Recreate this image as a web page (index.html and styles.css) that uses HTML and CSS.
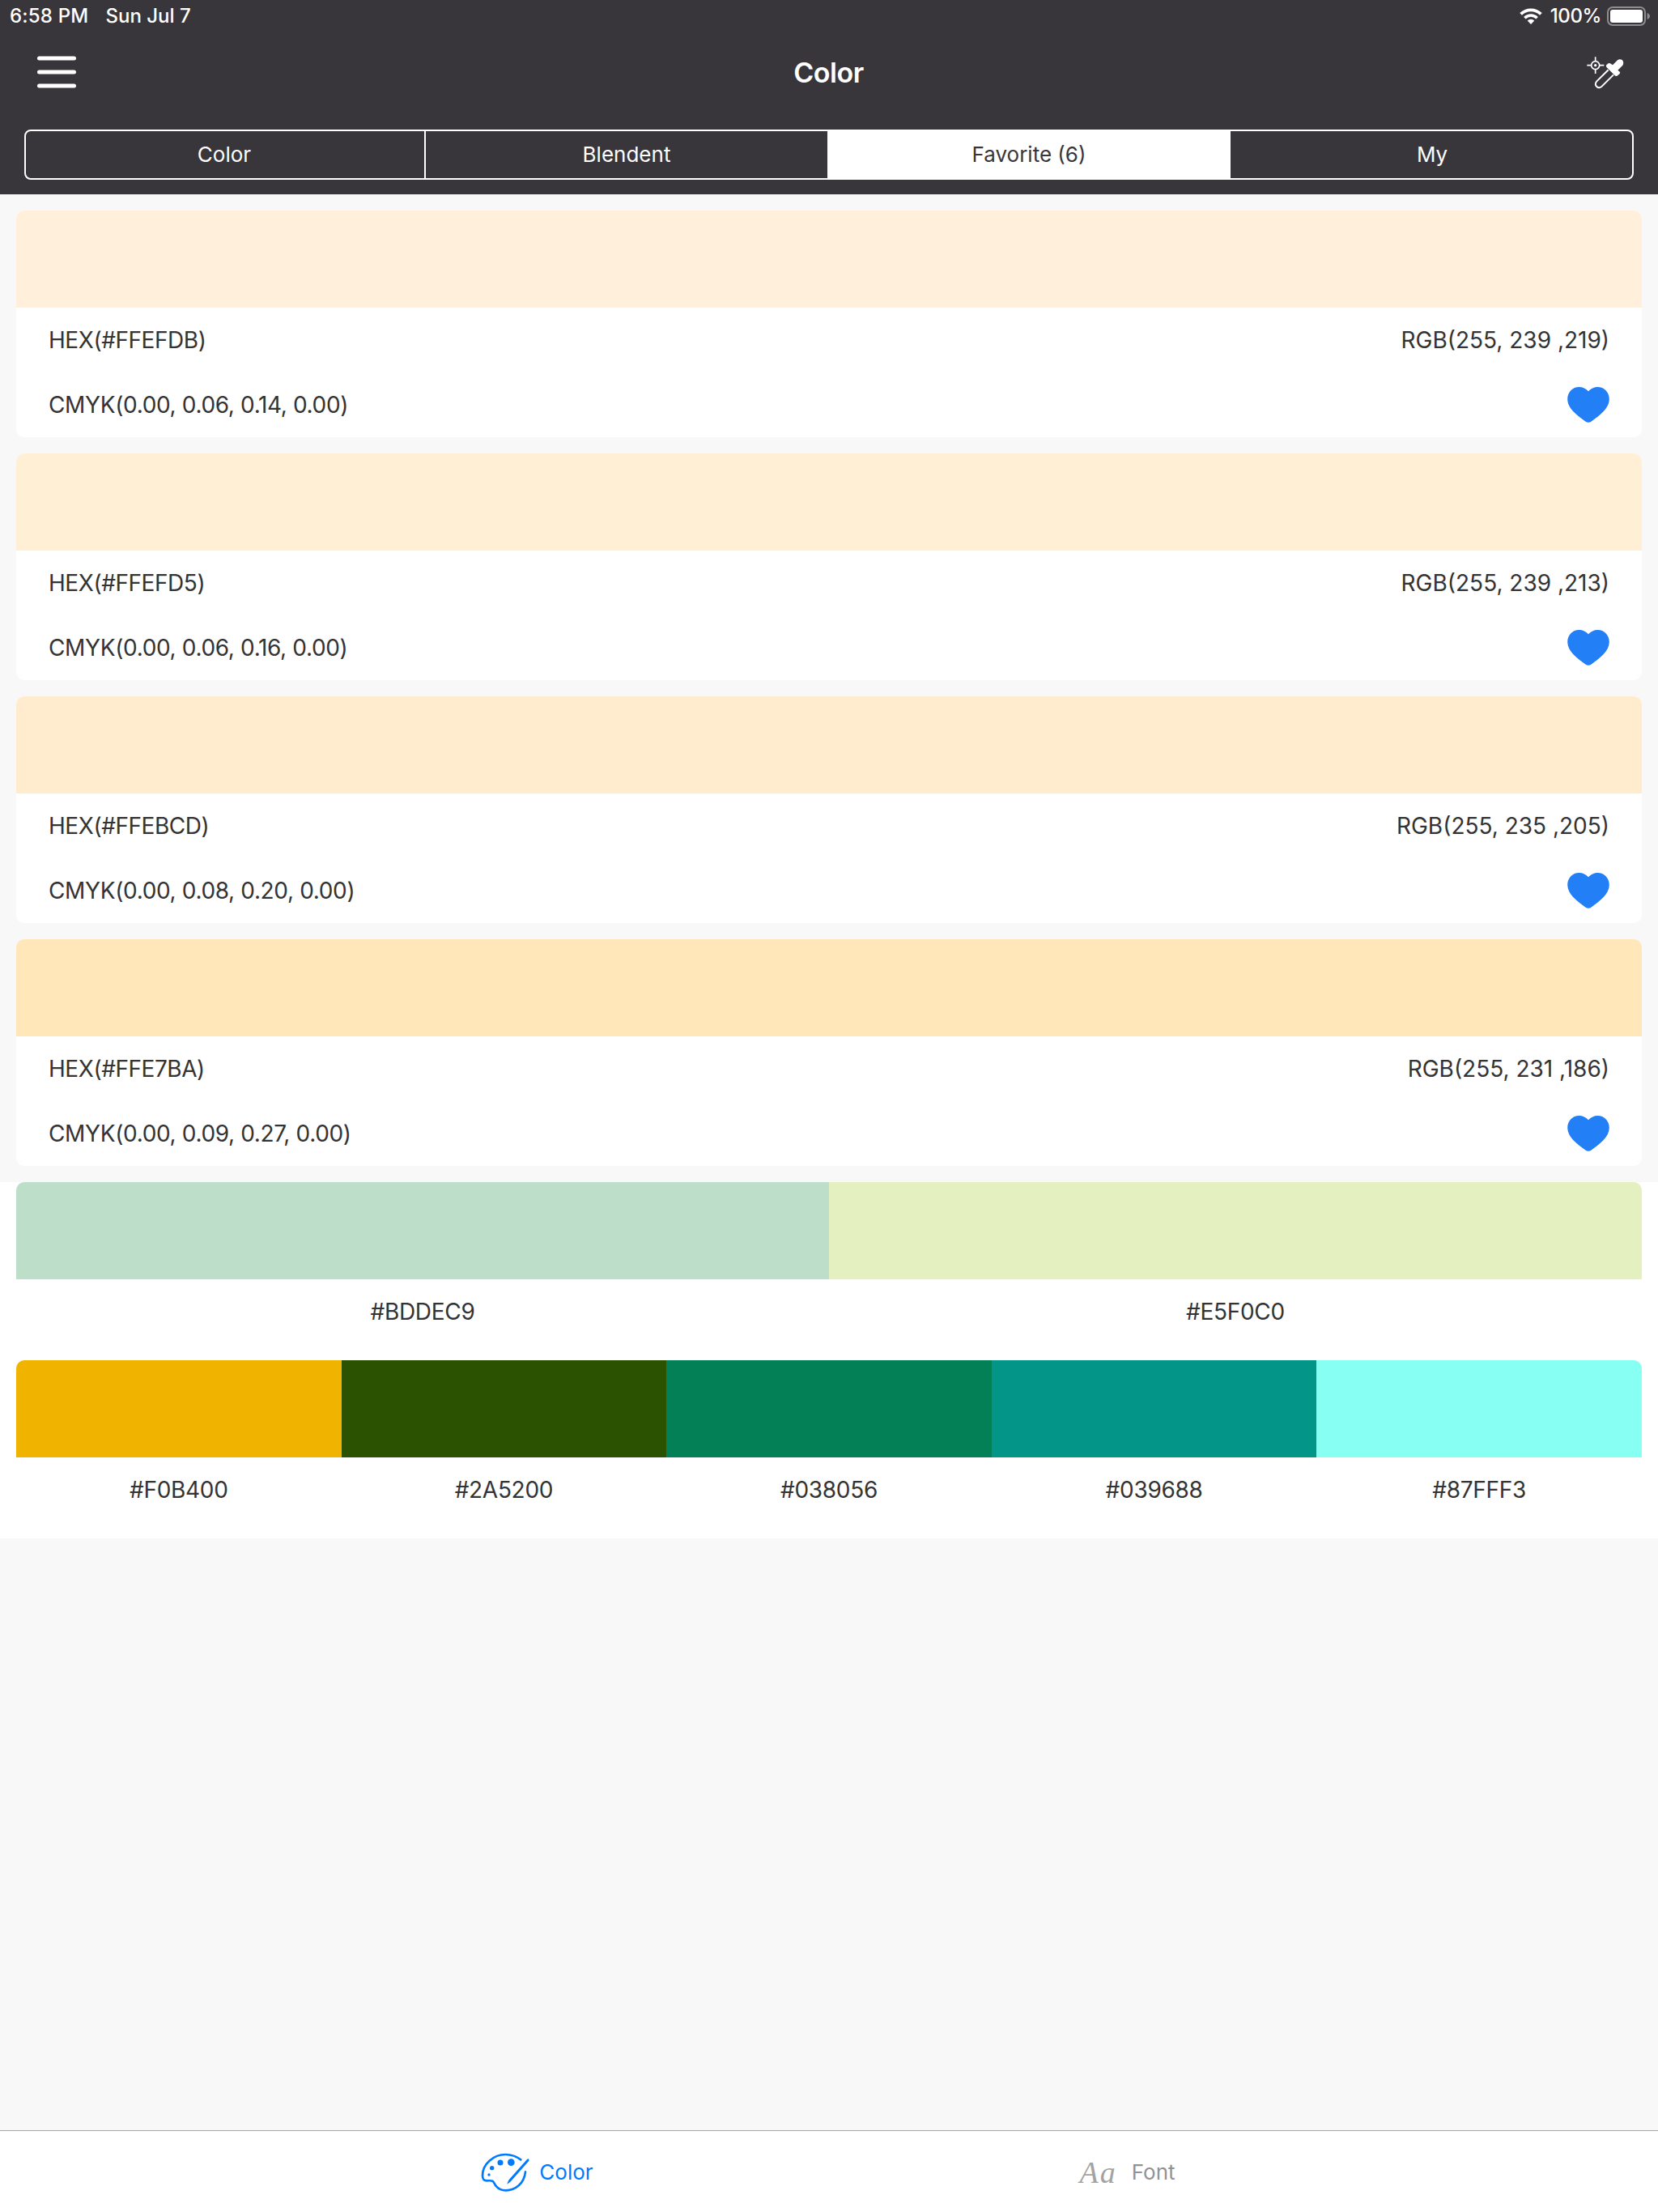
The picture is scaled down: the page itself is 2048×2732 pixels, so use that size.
FILE: index.html
```
<!DOCTYPE html>
<html>
	<head>
		<meta charset="utf-8">
		<title>Color</title>
		<link rel="stylesheet" href="styles.css">
	</head>
	<body>
		<svg class="defs" width="0" height="0">
			<symbol id="heart" viewBox="708 293 156 133">
				<path d="M786 309C776 299 766 293 751 293C727 293 708 312 708 338C708 372 744 399 776 422Q786 429 796 422C828 399 864 372 864 338C864 312 845 293 821 293C806 293 796 299 786 309Z"/>
			</symbol>
		</svg>

		<div class="header">
			<div class="status">
				<span class="time">6:58 PM</span>
				<span class="date">Sun Jul 7</span>
				<svg class="wifi" viewBox="0 0 28 20">
					<path d="M1.6 7.4A17.6 17.6 0 0 1 26.4 7.4" fill="none" stroke="#fff" stroke-width="3.8"/>
					<path d="M6.4 12.2A10.8 10.8 0 0 1 21.6 12.2" fill="none" stroke="#fff" stroke-width="3.6"/>
					<path d="M9.7 15.6A6 6 0 0 1 18.3 15.6L14 20Z" fill="#fff"/>
				</svg>
				<span class="percent">100%</span>
				<svg class="battery" viewBox="0 0 53 24">
					<rect x="1" y="1" width="46" height="22" rx="6" fill="none" stroke="#8e8c90" stroke-width="2"/>
					<rect x="4" y="4" width="40" height="16" rx="3" fill="#fff"/>
					<path d="M49.6 8Q53 9.5 53 12T49.6 16Z" fill="#8e8c90"/>
				</svg>
			</div>
			<div class="nav">
				<svg class="menu" viewBox="0 0 50 40">
					<path d="M3.5 3H46.500M3.500 20H46.500M3.500 37H46.500" stroke="#fff" stroke-width="5" stroke-linecap="round"/>
				</svg>
				<h1>Color</h1>
				<svg class="picker" viewBox="360 204 138 123">
					<g fill="none" stroke="#fff" stroke-width="5">
						<circle cx="392" cy="239" r="15"/>
						<path d="M392 208V225M392 253V270M361 239H378M406 239H424"/>
						<path d="M440 256L397 298C390 306 392 314 397 318C403 324 411 322 416 317L459 274" stroke-width="6"/>
					</g>
					<circle cx="392" cy="239" r="5" fill="#fff"/>
					<path d="M433 238Q441 228 449 233L456 238L474 220Q483 213 492 220Q499 229 493 239L475 257L483 264Q485 270 476 275Q470 282 464 277L434 247Q430 242 433 238Z" fill="#fff"/>
				</svg>
			</div>
			<ul class="segment">
				<li>Color</li>
				<li>Blendent</li>
				<li class="active">Favorite (6)</li>
				<li>My</li>
			</ul>
		</div>

		<div class="cards">
			<div class="card">
				<div class="swatch c1"></div>
				<div class="row"><span class="hex">HEX(#FFEFDB)</span><span>RGB(255, 239 ,219)</span></div>
				<div class="row"><span class="cmyk">CMYK(0.00, 0.06, 0.14, 0.00)</span><svg class="heart"><use href="#heart"/></svg></div>
			</div>
			<div class="card">
				<div class="swatch c2"></div>
				<div class="row"><span class="hex">HEX(#FFEFD5)</span><span>RGB(255, 239 ,213)</span></div>
				<div class="row"><span class="cmyk">CMYK(0.00, 0.06, 0.16, 0.00)</span><svg class="heart"><use href="#heart"/></svg></div>
			</div>
			<div class="card">
				<div class="swatch c3"></div>
				<div class="row"><span class="hex">HEX(#FFEBCD)</span><span>RGB(255, 235 ,205)</span></div>
				<div class="row"><span class="cmyk">CMYK(0.00, 0.08, 0.20, 0.00)</span><svg class="heart"><use href="#heart"/></svg></div>
			</div>
			<div class="card">
				<div class="swatch c4"></div>
				<div class="row"><span class="hex">HEX(#FFE7BA)</span><span>RGB(255, 231 ,186)</span></div>
				<div class="row"><span class="cmyk">CMYK(0.00, 0.09, 0.27, 0.00)</span><svg class="heart"><use href="#heart"/></svg></div>
			</div>
		</div>

		<div class="palettes">
			<div class="palette">
				<div class="item"><div class="swatch p1"></div><p>#BDDEC9</p></div>
				<div class="item"><div class="swatch p2"></div><p>#E5F0C0</p></div>
			</div>
			<div class="palette">
				<div class="item"><div class="swatch p3"></div><p>#F0B400</p></div>
				<div class="item"><div class="swatch p4"></div><p>#2A5200</p></div>
				<div class="item"><div class="swatch p5"></div><p>#038056</p></div>
				<div class="item"><div class="swatch p6"></div><p>#039688</p></div>
				<div class="item"><div class="swatch p7"></div><p>#87FFF3</p></div>
			</div>
		</div>

		<div class="tabbar">
			<div class="tab active">
				<svg class="paint" viewBox="104 145 180 150">
					<path d="M252 173C235 160 215 154 195 154C150 154 110 190 110 232C110 247 116 251 127 251C135 251 142 250 147 252C153 255 153 264 162 273C170 282 182 287 196 287C232 287 264 262 269 218" fill="none" stroke="#007aff" stroke-width="8" stroke-linecap="round"/>
					<path d="M275 172Q279 168 282 172Q284 175 281 179L218 250Q212 258 201 264Q204 252 209 246Z" fill="#007aff"/>
					<g fill="#007aff">
						<circle cx="134" cy="229" r="5"/>
						<circle cx="145" cy="204" r="8"/>
						<circle cx="176" cy="184" r="10.500"/>
						<circle cx="216" cy="183" r="13"/>
					</g>
				</svg>
				<span>Color</span>
			</div>
			<div class="tab">
				<i class="aa">Aa</i>
				<span>Font</span>
			</div>
		</div>
	</body>
</html>
```

FILE: styles.css
```
*{
	margin: 0;
	padding: 0;
	list-style: none;
	box-sizing: border-box;
}
body{
	height: 2732px;
	display: flex;
	flex-direction: column;
	background: #f8f8f8;
	color: #333;
	font-family: Inter, "Liberation Sans", sans-serif;
	font-size: 28px;
}
svg{
	display: block;
	flex: none;
}
.defs{
	position: absolute;
}

/* header */
.header{
	height: 240px;
	background: #39363b;
	color: #fff;
}
.status{
	height: 40px;
	padding: 0 10px 0 12px;
	display: flex;
	align-items: center;
	font-size: 24px;
	font-weight: 500;
}
.status span{
	padding-bottom: 1px;
}
.time{
	letter-spacing: 0.2px;
}
.date{
	margin-left: 21px;
}
.wifi{
	width: 28px;
	height: 20px;
	margin-left: auto;
}
.percent{
	margin: 0 7px 0 10px;
	letter-spacing: -0.4px;
}
.battery{
	width: 53px;
	height: 24px;
}
.nav{
	height: 98px;
	padding: 0 42px 0 45px;
	display: flex;
	justify-content: space-between;
	align-items: center;
}
.menu{
	width: 50px;
	height: 40px;
}
.nav h1{
	margin-right: 8px;
	padding-top: 1px;
	font-size: 34px;
	font-weight: 600;
	letter-spacing: -0.5px;
}
.picker{
	width: 46px;
	height: 41px;
}
.segment{
	height: 62px;
	margin: 22px 30px 0;
	display: grid;
	grid-template-columns: 494px 496px 498px 496px;
	border: 2px solid #fff;
	border-radius: 8px;
	font-size: 26px;
	line-height: 58px;
	text-align: center;
}
.segment li:first-child{
	padding-right: 2px;
	border-right: 2px solid #fff;
}
.segment li:last-child{
	padding-left: 2px;
}
.segment .active{
	background: #fff;
	color: #39363b;
}

/* favorite colors */
.cards{
	padding: 20px;
	display: flex;
	flex-direction: column;
	gap: 20px;
}
.card{
	height: 280px;
	background: #fff;
	border-radius: 10px;
	overflow: hidden;
}
.swatch{
	height: 120px;
}
.row{
	height: 80px;
	padding: 0 40px;
	display: flex;
	justify-content: space-between;
	align-items: center;
}
.hex{
	letter-spacing: -0.45px;
}
.cmyk{
	letter-spacing: -0.35px;
}
.heart{
	width: 52px;
	height: 44px;
	fill: #227ff6;
}
.c1{ background: #ffefdb; }
.c2{ background: #ffefd5; }
.c3{ background: #ffebcd; }
.c4{ background: #ffe7ba; }

/* blended palettes */
.palettes{
	padding: 0 20px;
	background: #fff;
}
.palette{
	height: 220px;
	display: flex;
	border-radius: 10px 10px 0 0;
	overflow: hidden;
}
.item{
	flex: 1;
}
.item p{
	line-height: 81px;
	text-align: center;
	letter-spacing: -0.3px;
}
.p1{ background: #bddec9; }
.p2{ background: #e5f0c0; }
.p3{ background: #f0b400; }
.p4{ background: #2a5200; }
.p5{ background: #038056; }
.p6{ background: #039688; }
.p7{ background: #87fff3; }

/* tab bar */
.tabbar{
	height: 101px;
	margin-top: auto;
	padding-left: 8px;
	display: grid;
	grid-template-columns: 729px 729px;
	justify-content: center;
	background: #fff;
	border-top: 1px solid #a8a8a8;
}
.tab{
	padding-top: 1px;
	display: flex;
	justify-content: center;
	align-items: center;
	color: #929292;
	font-size: 26px;
}
.tab.active{
	color: #007aff;
}
.paint{
	width: 60px;
	height: 50px;
	margin-right: 12px;
}
.aa{
	margin-right: 18px;
	font-family: "Liberation Serif", serif;
	font-size: 38px;
	letter-spacing: 2px;
	color: #a3a3a3;
}
```
